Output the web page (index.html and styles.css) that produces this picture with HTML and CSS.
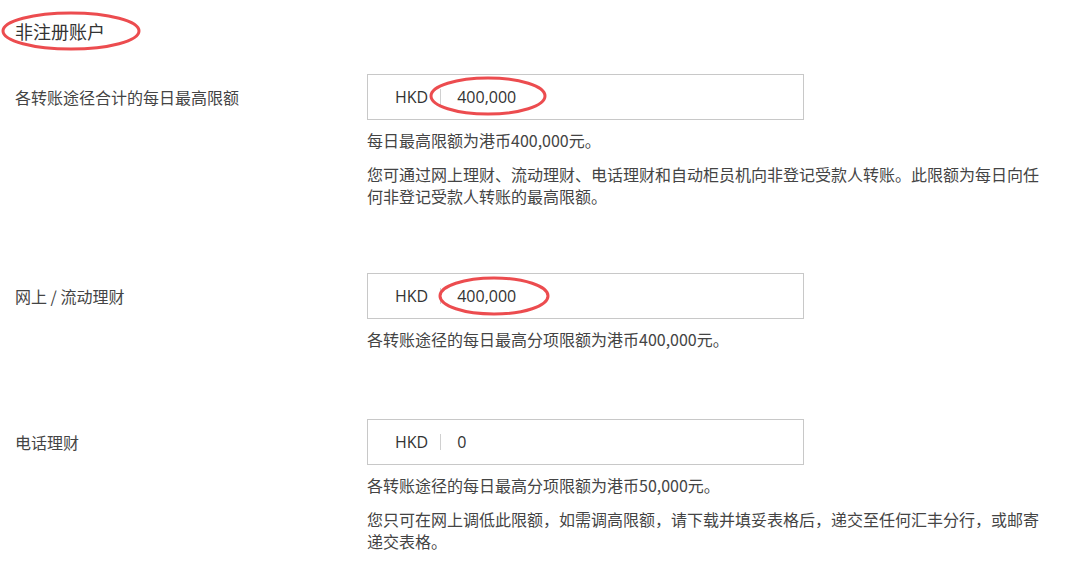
FILE: index.html
```html
<!DOCTYPE html>
<html lang="zh-CN">
<head>
<meta charset="utf-8">
<title>非注册账户</title>
<link rel="stylesheet" href="styles.css">
</head>
<body>
<div class="page">
  <h2 class="title">非注册账户</h2>

  <div class="row row-first">
    <div class="label">各转账途径合计的每日最高限额</div>
    <div class="body">
      <div class="field"><span class="cur">HKD</span><span class="sep"></span><span class="val">400,000</span></div>
      <p class="hint">每日最高限额为港币400,000元。</p>
      <p class="note">您可通过网上理财、流动理财、电话理财和自动柜员机向非登记受款人转账。此限额为每日向任何非登记受款人转账的最高限额。</p>
    </div>
  </div>

  <div class="row row-second">
    <div class="label">网上 / 流动理财</div>
    <div class="body">
      <div class="field"><span class="cur">HKD</span><span class="sep"></span><span class="val">400,000</span></div>
      <p class="hint">各转账途径的每日最高分项限额为港币400,000元。</p>
    </div>
  </div>

  <div class="row row-third">
    <div class="label">电话理财</div>
    <div class="body">
      <div class="field"><span class="cur">HKD</span><span class="sep"></span><span class="val">0</span></div>
      <p class="hint">各转账途径的每日最高分项限额为港币50,000元。</p>
      <p class="note">您只可在网上调低此限额，如需调高限额，请下载并填妥表格后，递交至任何汇丰分行，或邮寄递交表格。</p>
    </div>
  </div>
</div>

<svg class="marks" width="1080" height="563" viewBox="0 0 1080 563">
  <ellipse cx="71" cy="31" rx="68" ry="18" />
  <ellipse cx="488" cy="96" rx="57" ry="18" />
  <ellipse cx="494" cy="296" rx="54" ry="18" />
</svg>
</body>
</html>
```

FILE: styles.css
```css
* { box-sizing: border-box; }
html, body {
  margin: 0;
  padding: 0;
  background: #ffffff;
}
body {
  font-family: "Noto Sans CJK SC", "Noto Sans", sans-serif;
  color: #333333;
  position: relative;
  width: 1080px;
  height: 563px;
  overflow: hidden;
}
.page {
  padding: 20px 0 0 15px;
  display: flex;
  flex-direction: column;
}
.title {
  margin: 0;
  font-size: 18px;
  line-height: 22px;
  font-weight: normal;
  color: #333333;
}
.row {
  display: grid;
  grid-template-columns: 352px 1fr;
}
.row-first { margin-top: 32px; }
.row-second { margin-top: 66px; }
.row-third { margin-top: 69px; }
.label {
  font-size: 16px;
  line-height: 46px;
  color: #444444;
}
.body {
  display: flex;
  flex-direction: column;
}
.field {
  width: 437px;
  height: 46px;
  border: 1px solid #c8c8c8;
  display: flex;
  align-items: center;
  padding-left: 27px;
  font-size: 16px;
  color: #333333;
}
.cur, .val {
  font-family: "Open Sans", "Noto Sans CJK SC", sans-serif;
}
.sep {
  width: 1px;
  height: 16px;
  background: #d0d0d0;
  margin: 0 16px 0 12px;
}
.hint {
  margin: 9px 0 0 0;
  font-size: 16px;
  line-height: 22px;
  color: #444444;
}
.note {
  margin: 12px 0 0 0;
  width: 680px;
  font-size: 16px;
  line-height: 22px;
  color: #444444;
}
.marks {
  position: absolute;
  left: 0;
  top: 0;
  pointer-events: none;
}
.marks ellipse {
  fill: none;
  stroke: #ec4c4f;
  stroke-width: 3;
}
```
